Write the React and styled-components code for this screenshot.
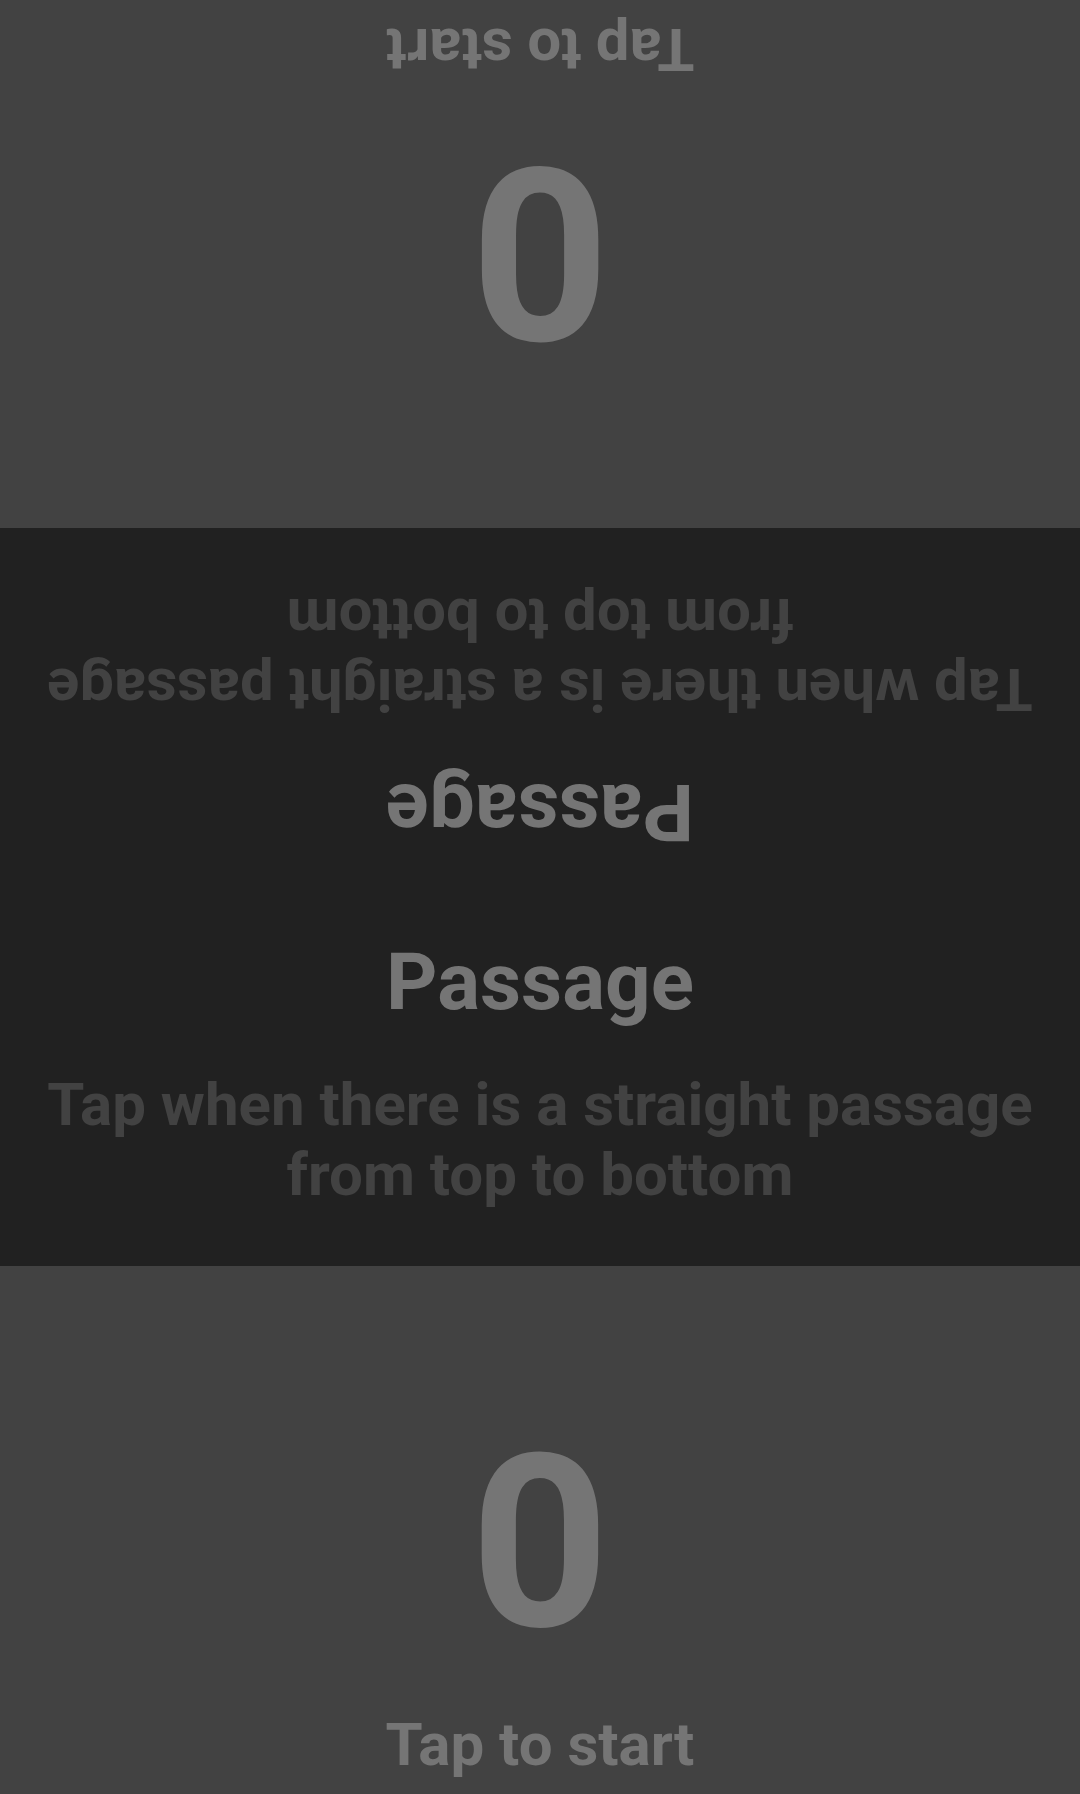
import React from "react";
import styled, { createGlobalStyle } from "styled-components";

const Global = createGlobalStyle`
  html, body { margin: 0; padding: 0; background: #212121; }
  body { font-family: Roboto, "Noto Sans", sans-serif; }
  * { box-sizing: border-box; }
`;

const Screen = styled.div`
  width: 1080px;
  height: 1794px;
  display: flex;
  flex-direction: column;
  overflow: hidden;
`;

const PlayerPanel = styled.div`
  height: 528px;
  flex: none;
  background: #424242;
  display: flex;
  flex-direction: column;
  align-items: center;
  padding-top: 135px;
  transform: ${(p) => (p.$flipped ? "rotate(180deg)" : "none")};
`;

const Score = styled.div`
  font-size: 242px;
  font-weight: 700;
  color: #757575;
  line-height: normal;
`;

const Hint = styled.div`
  margin-top: 24px;
  font-size: 60px;
  font-weight: 700;
  color: #757575;
  line-height: normal;
`;

const RulePanel = styled.div`
  flex: 1;
  background: #212121;
  display: flex;
  flex-direction: column;
`;

const RuleHalf = styled.div`
  flex: 1;
  display: flex;
  flex-direction: column;
  align-items: center;
  padding-top: 38px;
  text-align: center;
  transform: ${(p) => (p.$flipped ? "rotate(180deg)" : "none")};
`;

const RuleTitle = styled.div`
  font-size: 80px;
  font-weight: 700;
  color: #757575;
  line-height: normal;
`;

const RuleText = styled.div`
  margin-top: 41px;
  font-size: 60px;
  font-weight: 700;
  color: #424242;
  line-height: 70px;
  width: 1000px;
`;

function Player({ flipped }) {
  return (
    <PlayerPanel $flipped={flipped}>
      <Score>0</Score>
      <Hint>Tap to start</Hint>
    </PlayerPanel>
  );
}

function Rule({ flipped }) {
  return (
    <RuleHalf $flipped={flipped}>
      <RuleTitle>Passage</RuleTitle>
      <RuleText>Tap when there is a straight passage from top to bottom</RuleText>
    </RuleHalf>
  );
}

export default function App() {
  return (
    <>
      <Global />
      <Screen>
        <Player flipped />
        <RulePanel>
          <Rule flipped />
          <Rule />
        </RulePanel>
        <Player />
      </Screen>
    </>
  );
}
